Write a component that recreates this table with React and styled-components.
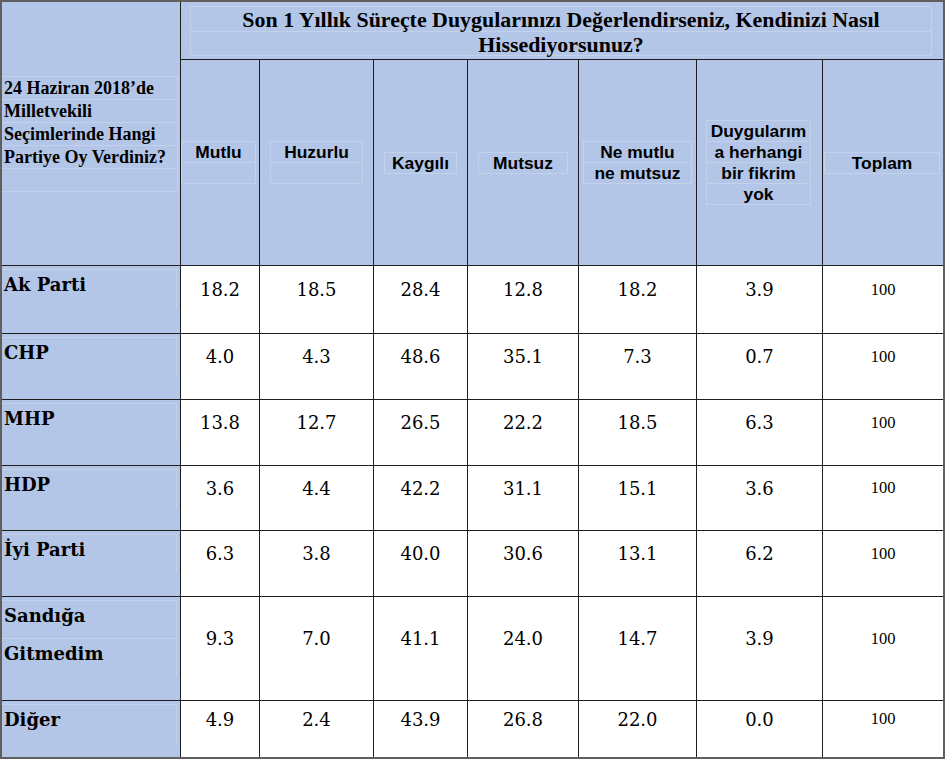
import React from "react";
import styled, { createGlobalStyle } from "styled-components";

const Global = createGlobalStyle`
  html, body { margin: 0; padding: 0; background: #ffffff; }
  body { font-family: "Liberation Serif", "Times New Roman", serif; color: #000; }
`;

const HEAD_BG = "#b4c6e7";
const FAINT = "#c3d1eb";

const Table = styled.div`
  display: grid;
  grid-template-columns: 178px 78px 113px 93px 110px 117px 125px 120px;
  grid-template-rows: 57px 205px 67px 65px 65px 64px 65px 103px 56px;
  gap: 1px;
  width: max-content;
  background: #1e1e1e;
  border: 2px solid #5f5f5f;
`;

const Corner = styled.div`
  grid-row: span 2;
  background: ${HEAD_BG};
  display: flex;
  flex-direction: column;
  justify-content: center;
`;

const CornerBox = styled.div`
  margin-right: 2px;
  border-top: 1px solid ${FAINT};
  border-right: 1px solid ${FAINT};
  font-family: "Liberation Serif", serif;
  font-weight: 700;
  font-size: 18px;
  line-height: 22px;
`;

const CornerLine = styled.div`
  height: 22px;
  padding-left: 2px;
  border-bottom: 1px solid ${FAINT};
  white-space: nowrap;
`;

const TitleCell = styled.div`
  grid-column: span 7;
  background: ${HEAD_BG};
  padding-top: 4px;
`;

const TitleBox = styled.div`
  margin: 0 11px 0 9px;
  border: 1px solid ${FAINT};
  border-bottom-width: 0;
  font-family: "Liberation Serif", serif;
  font-weight: 700;
  font-size: 21.9px;
  text-align: center;
`;

const TitleLine = styled.div`
  height: 23.5px;
  line-height: 25px;
  border-bottom: 1px solid ${FAINT};
  white-space: nowrap;
`;

const ColHead = styled.div`
  background: ${HEAD_BG};
  display: flex;
  flex-direction: column;
  justify-content: center;
`;

const ColBox = styled.div`
  margin: 0 ${(p) => p.$mr}px 0 ${(p) => p.$ml}px;
  border-left: 1px solid ${FAINT};
  border-right: 1px solid ${FAINT};
  border-top: 1px solid ${FAINT};
  font-family: "Liberation Sans", Arial, sans-serif;
  font-weight: 700;
  font-size: 17.4px;
  text-align: center;
`;

const ColLine = styled.div`
  height: 20px;
  line-height: 20px;
  border-bottom: 1px solid ${FAINT};
  white-space: nowrap;
`;

const RowLabel = styled.div`
  background: ${HEAD_BG};
`;

const LabelBox = styled.div`
  margin: 3px 3px 0 0;
  border-top: 1px solid ${FAINT};
  border-right: 1px solid ${FAINT};
  font-family: "DejaVu Serif", serif;
  font-weight: 700;
  font-size: 18px;
`;

const LabelLine = styled.div`
  line-height: 30px;
  padding: 0 0 7px 2px;
  border-bottom: 1px solid ${FAINT};
  white-space: nowrap;

  &:last-child {
    border-bottom-color: transparent;
  }
`;

const Value = styled.div`
  background: #ffffff;
  display: flex;
  align-items: center;
  justify-content: center;
  padding-bottom: 20px;
  font-family: ${(p) => (p.$total ? '"Liberation Serif", serif' : '"DejaVu Serif", serif')};
  font-size: ${(p) => (p.$total ? "16.5px" : "18px")};
`;

const columns = [
  { lines: ["Mutlu", ""], ml: 0, mr: 3 },
  { lines: ["Huzurlu", ""], ml: 10, mr: 10 },
  { lines: ["Kaygılı"], ml: 10, mr: 10 },
  { lines: ["Mutsuz"], ml: 10, mr: 10 },
  { lines: ["Ne mutlu", "ne mutsuz"], ml: 4, mr: 4 },
  { lines: ["Duygularım", "a herhangi", "bir fikrim", "yok"], ml: 9, mr: 11 },
  { lines: ["Toplam"], ml: 1, mr: 3 },
];

const rows = [
  [["Ak Parti"], "18.2", "18.5", "28.4", "12.8", "18.2", "3.9"],
  [["CHP"], "4.0", "4.3", "48.6", "35.1", "7.3", "0.7"],
  [["MHP"], "13.8", "12.7", "26.5", "22.2", "18.5", "6.3"],
  [["HDP"], "3.6", "4.4", "42.2", "31.1", "15.1", "3.6"],
  [["İyi Parti"], "6.3", "3.8", "40.0", "30.6", "13.1", "6.2"],
  [["Sandığa", "Gitmedim"], "9.3", "7.0", "41.1", "24.0", "14.7", "3.9"],
  [["Diğer"], "4.9", "2.4", "43.9", "26.8", "22.0", "0.0"],
];

export default function App() {
  return (
    <>
      <Global />
      <Table>
        <Corner>
          <CornerBox>
            <CornerLine>24 Haziran 2018’de</CornerLine>
            <CornerLine>Milletvekili</CornerLine>
            <CornerLine>Seçimlerinde Hangi</CornerLine>
            <CornerLine>Partiye Oy Verdiniz?</CornerLine>
            <CornerLine />
          </CornerBox>
        </Corner>
        <TitleCell>
          <TitleBox>
            <TitleLine>Son 1 Yıllık Süreçte Duygularınızı Değerlendirseniz, Kendinizi Nasıl</TitleLine>
            <TitleLine>Hissediyorsunuz?</TitleLine>
          </TitleBox>
        </TitleCell>
        {columns.map((c, i) => (
          <ColHead key={i}>
            <ColBox $ml={c.ml} $mr={c.mr}>
              {c.lines.map((l, j) => (
                <ColLine key={j}>{l}</ColLine>
              ))}
            </ColBox>
          </ColHead>
        ))}
        {rows.map((r, i) => (
          <React.Fragment key={i}>
            <RowLabel>
              <LabelBox>
                {r[0].map((l, j) => (
                  <LabelLine key={j}>{l}</LabelLine>
                ))}
              </LabelBox>
            </RowLabel>
            {r.slice(1).map((v, j) => (
              <Value key={j}>{v}</Value>
            ))}
            <Value $total>100</Value>
          </React.Fragment>
        ))}
      </Table>
    </>
  );
}
